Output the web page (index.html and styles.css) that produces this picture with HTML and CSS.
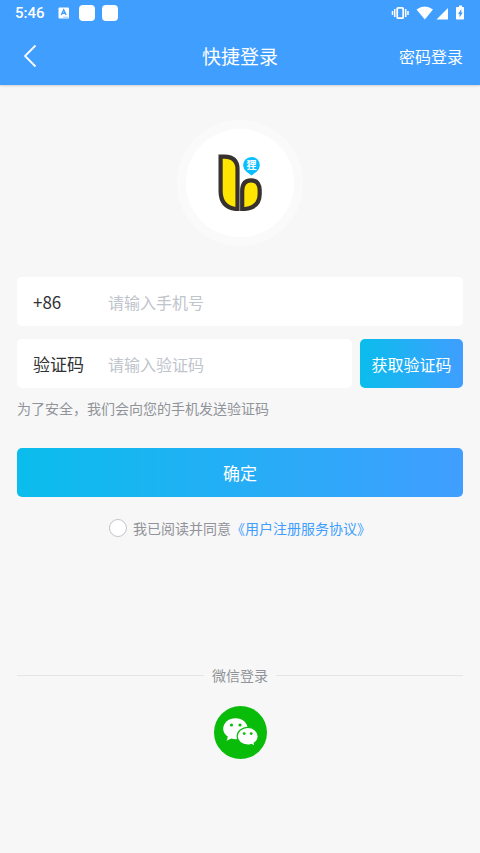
FILE: index.html
```html
<!DOCTYPE html>
<html lang="zh-CN">
<head>
<meta charset="utf-8">
<meta name="viewport" content="width=device-width, initial-scale=1">
<title>快捷登录</title>
<link rel="stylesheet" href="styles.css">
</head>
<body>
<header class="header">
  <div class="status">
    <span class="clock">5:46</span>
    <svg class="ime" width="12" height="12" viewBox="0 0 12 12" aria-hidden="true">
      <rect x="0.5" y="0.5" width="10.5" height="11" rx="1" fill="#fff"/>
      <path d="M3.300 8 5.700 2.800 8.100 8M4.200 6.300h3" fill="none" stroke="#409eff" stroke-width="1.400"/>
      <path d="M5 10.200h5" stroke="#9ccbff" stroke-width="1"/>
    </svg>
    <span class="tile"></span>
    <span class="tile"></span>
    <svg class="system" width="76" height="18" viewBox="0 0 76 18" aria-hidden="true">
      <g fill="none" stroke="#fff">
        <rect x="7.200" y="3.800" width="6" height="10.400" rx="1" stroke-width="1.800"/>
        <path d="M4.700 5v8M15.700 5v8" stroke-width="1.500"/>
        <path d="M2.500 7v4M18 7v4" stroke-width="1.500"/>
      </g>
      <path d="M26.500 5.500Q34.700-0.500 43 5.500L34.800 15.500Z" fill="#fff"/>
      <path d="M58 4v11.500H46.500Z" fill="#fff"/>
      <path d="M67 3h2V1.500h3V3h1.300q.7 0 .7.700v11.100q0 .7-.7.700h-6.600q-.7 0-.7-.7V3.700q0-.7 1-.7Z" fill="#fff"/>
      <path d="M71.300 5v3.500h1.500L69.500 13.500V10H68Z" fill="#409eff"/>
    </svg>
  </div>
  <nav class="nav">
    <button class="back" type="button" aria-label="返回">
      <svg width="14" height="24" viewBox="0 0 14 24"><path d="M12.500 1.500 2 12l10.500 10.500" fill="none" stroke="#fff" stroke-width="1.800"/></svg>
    </button>
    <h1 class="title">快捷登录</h1>
    <a class="switch" href="#password">密码登录</a>
  </nav>
</header>
<main class="page">
  <div class="logo">
    <svg width="46" height="60" viewBox="0 0 46 60" role="img" aria-label="logo">
      <g fill="#ffe500" stroke="#37322e" stroke-width="4.200">
        <path d="M3.600 3.600H7.500Q20.500 4 20.500 16V56H18.500Q3.600 54 3.600 38Z"/>
        <path d="M25.200 56V37.500Q25.500 27.300 34 27.300T42.700 37.500V41Q42.500 54.500 28 56Z"/>
      </g>
      <path d="M34.500 22.500 29.500 18.800A8.300 8.300 0 1 1 39.500 18.800Z" fill="#0abfff"/>
      <text class="pin" x="34.500" y="16" text-anchor="middle">狸</text>
    </svg>
  </div>
  <form class="form">
    <div class="field">
      <label class="label" for="phone">+86</label>
      <input class="input" id="phone" type="tel" placeholder="请输入手机号">
    </div>
    <div class="row">
      <div class="field">
        <label class="label" for="code">验证码</label>
        <input class="input" id="code" type="text" placeholder="请输入验证码">
      </div>
      <button class="send" type="button">获取验证码</button>
    </div>
    <p class="hint">为了安全，我们会向您的手机发送验证码</p>
    <button class="submit" type="submit">确定</button>
    <div class="agree">
      <input class="check" id="agree" type="checkbox">
      <label for="agree">我已阅读并同意</label><a class="terms" href="#terms">《用户注册服务协议》</a>
    </div>
  </form>
  <section class="other">
    <h2 class="divider">微信登录</h2>
    <button class="wechat" type="button" aria-label="微信登录">
      <svg width="53" height="53" viewBox="0 0 53 53">
        <circle cx="26.500" cy="26.500" r="26.500" fill="#0abc0a"/>
        <path d="M21.500 12.300C14.500 12.300 9.200 17 9.200 22.800C9.200 26 11 28.800 13.900 30.800L12.600 34.800L17.300 32.500Q19.400 33.200 21.500 33.200C28.500 33.200 33.800 28.600 33.800 22.800S28.500 12.300 21.500 12.300Z" fill="#fff"/>
        <path d="M33.700 21.300C39.500 21.300 44.200 25.300 44.200 30.300C44.200 33.200 42.600 35.500 40.200 37.100L41 40.300L37.200 38.500Q35.500 39.100 33.700 39.100C27.700 39.100 23.200 35.200 23.200 30.300S27.900 21.300 33.700 21.300Z" fill="#fff" stroke="#0abc0a" stroke-width="1.200"/>
        <g fill="#0abc0a"><circle cx="17.500" cy="19" r="1.600"/><circle cx="26" cy="19" r="1.600"/><circle cx="30.200" cy="27.600" r="1.400"/><circle cx="37.200" cy="27.600" r="1.400"/></g>
      </svg>
    </button>
  </section>
</main>
</body>
</html>
```
FILE: styles.css
```css
* {
  box-sizing: border-box;
}

body {
  margin: 0;
  min-height: 100vh;
  background: #f7f7f7;
  color: #303133;
  font-family: "Noto Sans CJK SC", sans-serif;
  font-size: 14px;
  line-height: 20px;
}

button,
input {
  margin: 0;
  padding: 0;
  border: 0;
  background: none;
  color: inherit;
  font: inherit;
}

a {
  color: inherit;
  text-decoration: none;
}

svg {
  display: block;
}

.header {
  background: #409eff;
  color: #fff;
  box-shadow: 0 1px 2px rgba(0, 0, 0, 0.16);
}

.status {
  display: flex;
  align-items: center;
  height: 26px;
  padding: 0 14px 0 15px;
}

.clock {
  font-family: Roboto, sans-serif;
  font-size: 15px;
  font-weight: 500;
}

.ime {
  margin: 0 9px 0 13px;
}

.tile {
  width: 16px;
  height: 16px;
  margin-right: 7px;
  border-radius: 4px;
  background: #fff;
}

.system {
  margin-left: auto;
}

.nav {
  display: grid;
  grid-template-columns: 1fr auto 1fr;
  align-items: center;
  height: 59px;
  padding: 0 17px;
}

.back {
  padding-left: 6px;
  justify-self: start;
}

.title {
  margin: 0;
  font-size: 19px;
  font-weight: 400;
}

.switch {
  justify-self: end;
  font-size: 16px;
}

.page {
  padding: 35px 17px;
}

.logo {
  display: flex;
  align-items: center;
  justify-content: center;
  width: 126px;
  height: 126px;
  margin: 0 auto 31px;
  border: 9px solid #fafafa;
  border-radius: 50%;
  background: #fff;
}

.pin {
  fill: #fff;
  font-size: 10px;
  font-weight: 700;
}

.field {
  display: flex;
  flex: 1;
  align-items: center;
  min-width: 0;
  height: 49px;
  padding: 0 16px;
  border-radius: 5px;
  background: #fff;
}

.label {
  width: 75px;
  font-size: 17px;
}

.input {
  flex: 1;
  min-width: 0;
  height: 100%;
  outline: 0;
  font-size: 16px;
}

.input::placeholder {
  color: #c0c4cc;
}

.row {
  display: flex;
  gap: 8px;
  margin-top: 13px;
}

.send,
.submit {
  height: 49px;
  border-radius: 5px;
  background: linear-gradient(90deg, #0abdec, #409eff);
  color: #fff;
}

.send {
  width: 103px;
  font-size: 16px;
}

.hint {
  margin: 10px 0 30px;
  color: #909399;
}

.submit {
  width: 100%;
  font-size: 17px;
}

.agree {
  display: flex;
  align-items: center;
  justify-content: center;
  margin-top: 21px;
  color: #909399;
}

.check {
  width: 18px;
  height: 18px;
  margin-right: 6px;
  border: 1px solid #c0c4cc;
  border-radius: 50%;
  background: #fff;
  appearance: none;
}

.check:checked {
  background: #409eff;
}

.terms {
  color: #409eff;
}

.other {
  margin-top: 127px;
}

.divider {
  display: flex;
  align-items: center;
  gap: 8px;
  margin: 0 0 21px;
  color: #909399;
  font-size: 14px;
  font-weight: 400;
}

.divider::before,
.divider::after {
  flex: 1;
  height: 1px;
  background: #e4e5e7;
  content: "";
}

.wechat {
  display: block;
  margin: 0 auto;
  border-radius: 50%;
}
```
